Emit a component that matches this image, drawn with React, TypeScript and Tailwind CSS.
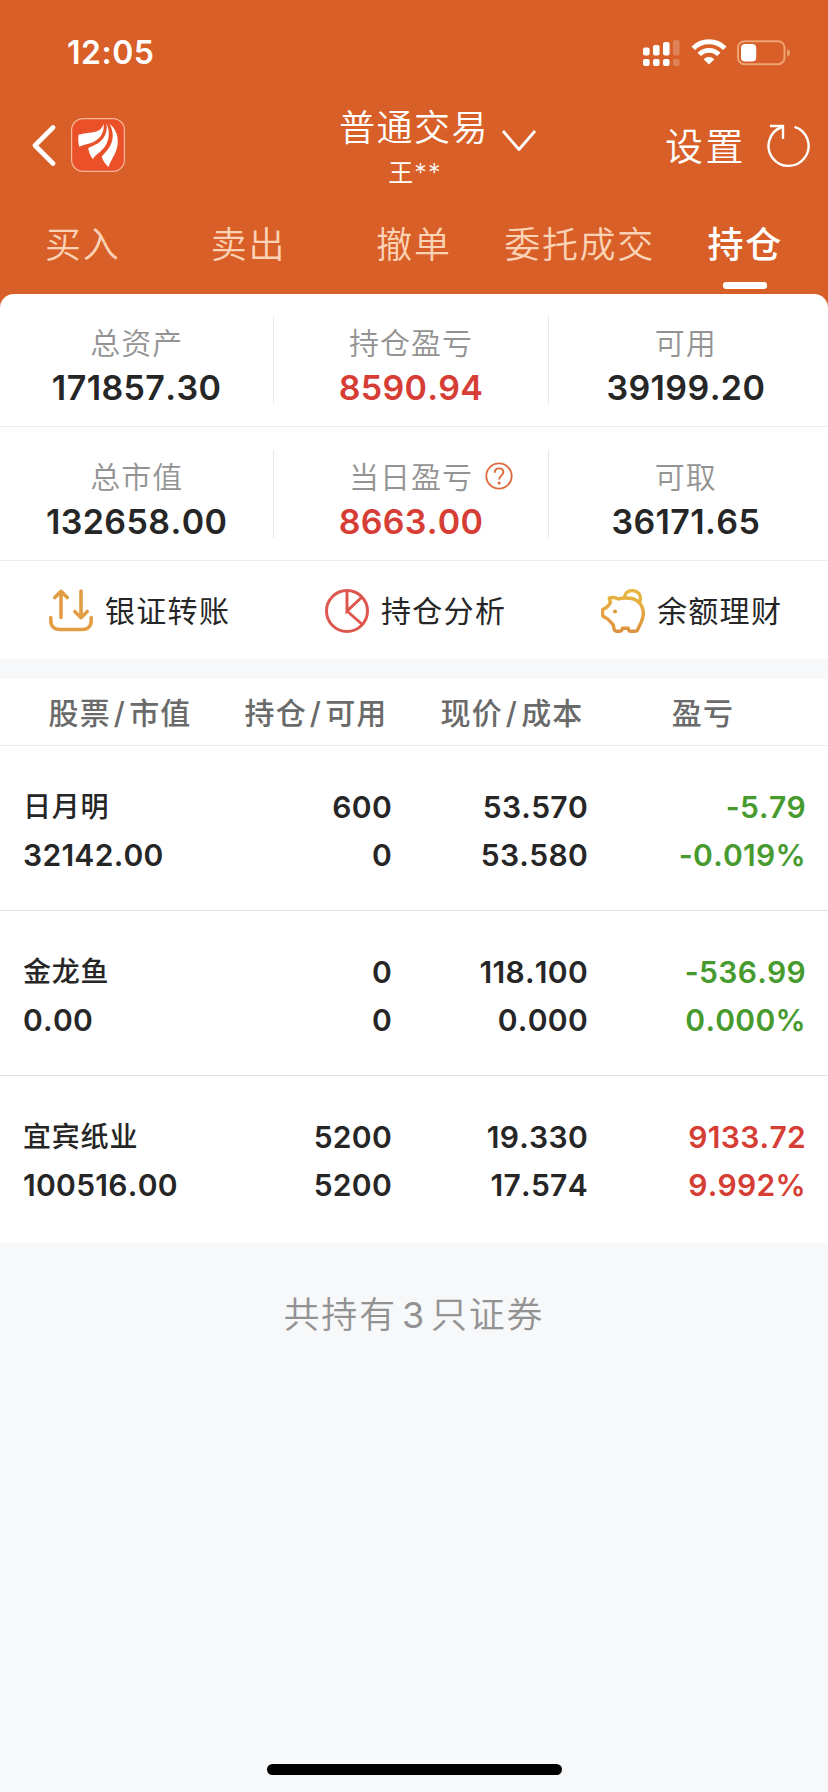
import React from "react";

const FONT = "font-['Inter','Noto_Sans_CJK_SC',sans-serif]";

function StatusBar() {
  return (
    <div className="flex h-[106px] items-center justify-between pl-[67px] pr-[37px]">
      <span className="text-[32px] leading-[40px] font-semibold tracking-[0.5px]">12:05</span>
      <div className="flex h-[28px] items-center">
        <svg width="38" height="28" viewBox="0 0 38 28" fill="#fff">
          <rect x="0" y="8.5" width="6.6" height="8" rx="2" />
          <rect x="10" y="6" width="6.6" height="10.5" rx="2" />
          <rect x="20" y="3" width="6.6" height="13.5" rx="2" />
          <rect x="0" y="20" width="6.6" height="7" rx="2" />
          <rect x="10" y="20" width="6.6" height="7" rx="2" />
          <rect x="20" y="20" width="6.6" height="7" rx="2" />
          <g opacity="0.22">
            <rect x="30" y="1" width="6.6" height="15.5" rx="2" />
            <rect x="30" y="20" width="6.6" height="7" rx="2" />
          </g>
        </svg>
        <svg className="ml-[10px]" width="36" height="28" viewBox="0 0 36 28" fill="none">
          <path d="M2.2 9.2A22.3 22.3 0 0 1 33.8 9.2" stroke="#fff" strokeWidth="5" />
          <path d="M8.2 15.4A13.8 13.8 0 0 1 27.8 15.4" stroke="#fff" strokeWidth="4.8" />
          <path d="M18 25.5L12.6 20.2A7.7 7.7 0 0 1 23.4 20.2Z" fill="#fff" />
        </svg>
        <svg className="ml-[10px]" width="54" height="28" viewBox="0 0 54 28" fill="none">
          <rect x="1" y="2.2" width="46.5" height="23" rx="6.5" stroke="#eda272" strokeWidth="2" />
          <rect x="4" y="5" width="15.2" height="17.5" rx="4" fill="#fff" />
          <path d="M50.2 10.2C54 11.4 54 16.4 50.2 17.6Z" fill="#eda272" />
        </svg>
      </div>
    </div>
  );
}

function BrandLogo() {
  return (
    <svg width="54" height="54" viewBox="0 0 54 54" fill="#fff">
      <rect x="0.6" y="0.6" width="52.8" height="52.8" rx="11.5" fill="#ea5128" stroke="#f7b698" strokeWidth="1.2" />
      <path d="M32.6 5.6C31.5 9.5 30 12 25.5 13.5C20 15.3 13 14.8 7.6 16.8C7 20.5 7.2 25 8.2 28.8C13 26.2 18.5 26 22.5 24C29.5 20.5 33.5 14.5 32.6 5.6Z" />
      <path d="M35.4 5.2C37 13 33.5 21 27.5 25C24.5 27 21 28 17.2 30C17.8 34 19.2 37.5 21.6 41C24 37.5 28 35 31.5 31.5C38.5 24.5 39.5 13.5 35.4 5.2Z" />
      <path d="M38.6 5.8C43.5 15 42.5 24.5 36.8 31.5C35 33.7 32.7 36 30.7 38.6C31.6 42.5 34 45.8 37.5 48.9C38.8 44.5 41.5 40.5 43.8 36C48.8 26 48 13.5 38.6 5.8Z" />
    </svg>
  );
}

function NavBar() {
  return (
    <div className="grid h-[94px] grid-cols-[1fr_auto_1fr] text-white">
      <div className="flex items-start pl-[32px] pt-[12px]">
        <svg className="mt-[7px]" width="24" height="41" viewBox="0 0 24 41" fill="none">
          <path d="M21 2.5L3 20.5L21 38.5" stroke="#fff" strokeWidth="4.6" strokeLinecap="round" strokeLinejoin="round" />
        </svg>
        <div className="ml-[15px]">
          <BrandLogo />
        </div>
      </div>
      <div className="flex pl-[48px]">
        <div className="flex flex-col items-center">
          <span className="text-[36px] leading-[44px] tracking-[1.5px] font-[350]">普通交易</span>
          <span className="mt-[1px] ml-[2px] text-[25px] leading-[44px] tracking-[1.2px] font-[350]">王**</span>
        </div>
        <svg className="ml-[12px] mt-[23px]" width="36" height="24" viewBox="0 0 36 24" fill="none">
          <path d="M2 2L18 20.5L34 2" stroke="#fff" strokeWidth="2.8" strokeLinejoin="round" />
        </svg>
      </div>
      <div className="flex items-start justify-end pr-[17px] pt-[17px]">
        <span className="text-[38px] leading-[46px] tracking-[2.5px] font-[350]">设置</span>
        <svg className="ml-[21px]" width="44" height="46" viewBox="0 0 44 46" fill="none" stroke="#fff" strokeWidth="2.4">
          <path d="M27.5 3.8A20 20 0 1 1 15 4" />
          <path d="M3 3H16V16" />
        </svg>
      </div>
    </div>
  );
}

const tabs = ["买入", "卖出", "撤单", "委托成交", "持仓"];

function Tabs() {
  return (
    <div className="grid h-[94px] grid-cols-5">
      {tabs.map((t) => {
        const active = t === "持仓";
        return (
          <div key={t} className="flex flex-col items-center pt-[23px]">
            <span
              className={
                active
                  ? "text-[36px] leading-[44px] tracking-[1.7px] whitespace-nowrap font-medium text-white"
                  : "text-[36px] leading-[44px] tracking-[1.7px] whitespace-nowrap font-[350] text-[#fbd2b6]"
              }
            >
              {t}
            </span>
            {active && <span className="mt-[15px] h-[7px] w-[44px] rounded-[3px] bg-white" />}
          </div>
        );
      })}
    </div>
  );
}

type Stat = { label: string; value: string; red?: boolean; help?: boolean };

const stats: Stat[][] = [
  [
    { label: "总资产", value: "171857.30" },
    { label: "持仓盈亏", value: "8590.94", red: true },
    { label: "可用", value: "39199.20" },
  ],
  [
    { label: "总市值", value: "132658.00" },
    { label: "当日盈亏", value: "8663.00", red: true, help: true },
    { label: "可取", value: "36171.65" },
  ],
];

function HelpIcon() {
  return (
    <svg className="absolute left-full top-[5px] ml-[12px]" width="28" height="28" viewBox="0 0 28 28" fill="none">
      <circle cx="14" cy="14" r="12.7" stroke="#dc6a3a" strokeWidth="1.8" />
      <path d="M9.8 10.8C9.8 8 11.7 6.4 14.1 6.4C16.6 6.4 18.4 8 18.4 10.3C18.4 13.2 14.2 13.7 14.2 17.4" stroke="#dc6a3a" strokeWidth="1.9" />
      <circle cx="14.1" cy="21" r="1.6" fill="#dc6a3a" />
    </svg>
  );
}

function Summary() {
  return (
    <>
      {stats.map((row, r) => (
        <div
          key={r}
          className={
            r === 0
              ? "grid h-[133px] grid-cols-3 border-b-[1.5px] border-[#ececec] pt-[22px] pr-[5px]"
              : "grid h-[134px] grid-cols-3 border-b-[1.5px] border-[#ececec] pt-[23px] pr-[5px]"
          }
        >
          {row.map((s, i) => (
            <div key={s.label} className="flex">
              <div className="flex flex-1 flex-col items-center pt-[7px]">
                <span className="relative text-[30px] leading-[40px] tracking-[1px] font-[350] text-[#939393]">
                  {s.label}
                  {s.help && <HelpIcon />}
                </span>
                <span
                  className={
                    s.red
                      ? "mt-[4px] text-[34px] leading-[42px] font-semibold tracking-[0.3px] [font-kerning:none] text-[#d63d35]"
                      : "mt-[4px] text-[34px] leading-[42px] font-semibold tracking-[0.4px] [font-kerning:none] text-[#262626]"
                  }
                >
                  {s.value}
                </span>
              </div>
              {i < 2 && <div className="h-[88px] w-px bg-[#e8e8e8]" />}
            </div>
          ))}
        </div>
      ))}
    </>
  );
}

function TransferIcon() {
  return (
    <svg width="44" height="44" viewBox="0 0 44 44" fill="none" stroke="#e19e45" strokeWidth="3.6" strokeLinecap="round" strokeLinejoin="round">
      <path d="M12 28.5V2.8M5.8 8.5L12 2.3L18.2 8.5" />
      <path d="M32 2V28.2M25.8 22.5L32 28.7L38.2 22.5" />
      <path d="M1.8 28.5V31.5C1.8 37 5 40.5 10.5 40.5H33.5C39 40.5 42.2 37 42.2 31.5V28.5" />
    </svg>
  );
}

function PieIcon() {
  return (
    <svg width="44" height="44" viewBox="0 0 44 44" fill="none" stroke="#de574f" strokeWidth="3">
      <circle cx="22" cy="22" r="20.5" />
      <path d="M22 1.5V22L37 8M22 22L37.3 35.5" />
    </svg>
  );
}

function PiggyIcon() {
  return (
    <svg width="44" height="44" viewBox="0 0 44 44" fill="none" stroke="url(#pig)" strokeWidth="3.4" strokeLinejoin="round">
      <defs>
        <linearGradient id="pig" gradientUnits="userSpaceOnUse" x1="22" y1="0" x2="22" y2="44">
          <stop offset="0" stopColor="#e8b93f" />
          <stop offset="1" stopColor="#df9140" />
        </linearGradient>
      </defs>
      <path d="M8.2 9.2C12 7.8 15 8.7 17.5 10C20 9 25 8.8 29 9.2C37 10 42.3 16.5 42.3 24.5C42.3 31 39 35 36.8 40.5C36.3 41.8 35.5 42.2 34.5 42.2H29.5C28 42.2 27.5 41.3 27.2 39.2H21.5C21 41.3 20.5 42.2 19 42.2H15.5C13.8 42.2 13.3 41.3 13 39.5L12.3 36C9.5 33 8 30.5 5.5 29.2L2.8 27.7C1.9 27.2 1.6 26.7 1.6 25.8V21.5C1.6 20.4 2.2 19.9 3.2 19.6C6 18.8 7 17.5 9.5 13.5Z" />
      <path d="M23.5 9.5C23 5 26.5 1.6 31 1.6C36 1.6 39.5 5 39.5 9C39.5 10.8 39 12 38.3 13" />
      <circle cx="14" cy="22.5" r="2.1" fill="#df9c40" stroke="none" />
    </svg>
  );
}

const actions = [
  { label: "银证转账", icon: <TransferIcon /> },
  { label: "持仓分析", icon: <PieIcon /> },
  { label: "余额理财", icon: <PiggyIcon /> },
];

function Actions() {
  return (
    <div className="grid h-[97px] grid-cols-3">
      {actions.map((a) => (
        <div key={a.label} className="flex items-center pl-[49px] pt-[2px]">
          {a.icon}
          <span className="ml-[12px] text-[30px] leading-[40px] tracking-[1.3px] whitespace-nowrap text-[#262626]">{a.label}</span>
        </div>
      ))}
    </div>
  );
}

const heads = [
  { a: "股票", b: "市值" },
  { a: "持仓", b: "可用" },
  { a: "现价", b: "成本" },
];

function TableHead() {
  return (
    <div className="flex h-[67px] items-center border-b-[1.5px] border-[#ececec] pl-[22px] pt-[2px] text-[30px] leading-[40px] tracking-[1.2px] font-medium text-[#6a6a6a]">
      {heads.map((h) => (
        <div key={h.a} className="flex w-[196px] justify-center">
          <span>{h.a}</span>
          <span className="mx-[3px]">/</span>
          <span>{h.b}</span>
        </div>
      ))}
      <div className="flex flex-1 justify-center pr-[32px]">盈亏</div>
    </div>
  );
}

type Holding = {
  name: string;
  market: string;
  qty: string;
  avail: string;
  price: string;
  cost: string;
  pl: string;
  pct: string;
  up: boolean;
};

const holdings: Holding[] = [
  { name: "日月明", market: "32142.00", qty: "600", avail: "0", price: "53.570", cost: "53.580", pl: "-5.79", pct: "-0.019%", up: false },
  { name: "金龙鱼", market: "0.00", qty: "0", avail: "0", price: "118.100", cost: "0.000", pl: "-536.99", pct: "0.000%", up: false },
  { name: "宜宾纸业", market: "100516.00", qty: "5200", avail: "5200", price: "19.330", cost: "17.574", pl: "9133.72", pct: "9.992%", up: true },
];

function HoldingRow({ h, last }: { h: Holding; last: boolean }) {
  return (
    <div
      className={
        last
          ? "flex h-[167px] pl-[23px] pr-[22px] pt-[37px] text-[30px] leading-[48px] font-semibold tracking-[0.3px] [font-kerning:none] text-[#262626]"
          : "flex h-[165px] border-b-[1.5px] border-[#e2e2e2] pl-[23px] pr-[22px] pt-[37px] text-[30px] leading-[48px] font-semibold tracking-[0.3px] [font-kerning:none] text-[#262626]"
      }
    >
      <div className="flex w-[173px] flex-col">
        <span className="text-[28px] font-medium tracking-[0.8px]">{h.name}</span>
        <span>{h.market}</span>
      </div>
      <div className="flex w-[196px] flex-col items-end">
        <span>{h.qty}</span>
        <span>{h.avail}</span>
      </div>
      <div className="flex w-[196px] flex-col items-end">
        <span>{h.price}</span>
        <span>{h.cost}</span>
      </div>
      <div className={h.up ? "flex flex-1 flex-col items-end text-[#d63d35]" : "flex flex-1 flex-col items-end text-[#479b2e]"}>
        <span>{h.pl}</span>
        <span>{h.pct}</span>
      </div>
    </div>
  );
}

export default function App() {
  return (
    <div className={`flex h-[1792px] w-[828px] flex-col overflow-hidden bg-[#f7f8fa] ${FONT}`}>
      <header className="bg-[#d85f27] text-white">
        <StatusBar />
        <NavBar />
        <Tabs />
      </header>
      <div className="bg-[#d85f27]">
        <section className="rounded-t-[14px] bg-white">
          <Summary />
          <Actions />
        </section>
      </div>
      <section className="mt-[21px] bg-white">
        <TableHead />
        {holdings.map((h, i) => (
          <HoldingRow key={h.name} h={h} last={i === holdings.length - 1} />
        ))}
      </section>
      <footer className="flex flex-1 flex-col items-center justify-between pb-[17px] pt-[49px]">
        <p className="text-[36px] leading-[46px] tracking-[1.8px] font-[350] text-[#929292]">
          共持有<span className="mx-[5px] font-normal">3</span>只证券
        </p>
        <div className="h-[11px] w-[295px] rounded-full bg-black" />
      </footer>
    </div>
  );
}
